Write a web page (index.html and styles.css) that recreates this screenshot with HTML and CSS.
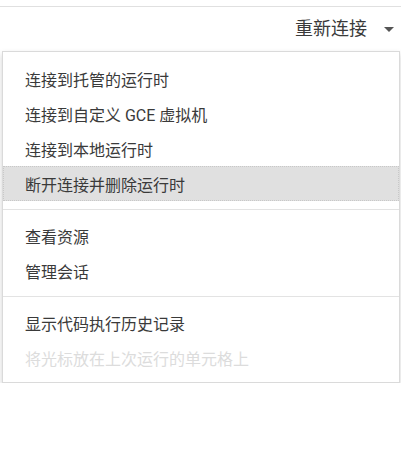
FILE: index.html
```html
<!DOCTYPE html>
<html lang="zh-CN">
<head>
<meta charset="utf-8">
<link rel="stylesheet" href="styles.css">
</head>
<body>
<div class="topline"></div>
<div class="toolbar">
  <span class="reconnect">重新连接</span>
  <span class="caret"></span>
</div>
<div class="menu">
  <div class="item">连接到托管的运行时</div>
  <div class="item">连接到自定义 GCE 虚拟机</div>
  <div class="item">连接到本地运行时</div>
  <div class="item active">断开连接并删除运行时</div>
  <div class="sep"></div>
  <div class="item">查看资源</div>
  <div class="item">管理会话</div>
  <div class="sep"></div>
  <div class="item">显示代码执行历史记录</div>
  <div class="item disabled">将光标放在上次运行的单元格上</div>
</div>
</body>
</html>
```

FILE: styles.css
```css
html, body {
  margin: 0;
  padding: 0;
  background: #fff;
  font-family: Roboto, "Noto Sans CJK SC", sans-serif;
}
.topline {
  margin-top: 6px;
  height: 1px;
  background: #e0e0e0;
}
.toolbar {
  height: 44px;
  display: flex;
  justify-content: flex-end;
  align-items: center;
  padding-right: 7px;
  gap: 17px;
}
.reconnect {
  font-size: 18px;
  color: #3a3a3a;
  line-height: 1;
}
.caret {
  width: 0;
  height: 0;
  border-left: 5px solid transparent;
  border-right: 5px solid transparent;
  border-top: 5px solid #555;
}
.menu {
  margin: 0 1px 0 2px;
  border: 1px solid #dadada;
  background: #fff;
  box-shadow: 0 3px 6px rgba(0,0,0,0.18);
  padding: 9px 0 7px;
}
.item {
  height: 35px;
  display: flex;
  align-items: center;
  padding-left: 22px;
  font-size: 16px;
  color: #3a3a3a;
  box-sizing: border-box;
}
.item.active {
  background: #e0e0e0;
  outline: 1px dotted #c8c8c8;
  outline-offset: -1px;
}
.item.disabled {
  color: #dcdcdc;
}
.sep {
  height: 1px;
  background: #e3e3e3;
  margin: 8px 0;
}
```
